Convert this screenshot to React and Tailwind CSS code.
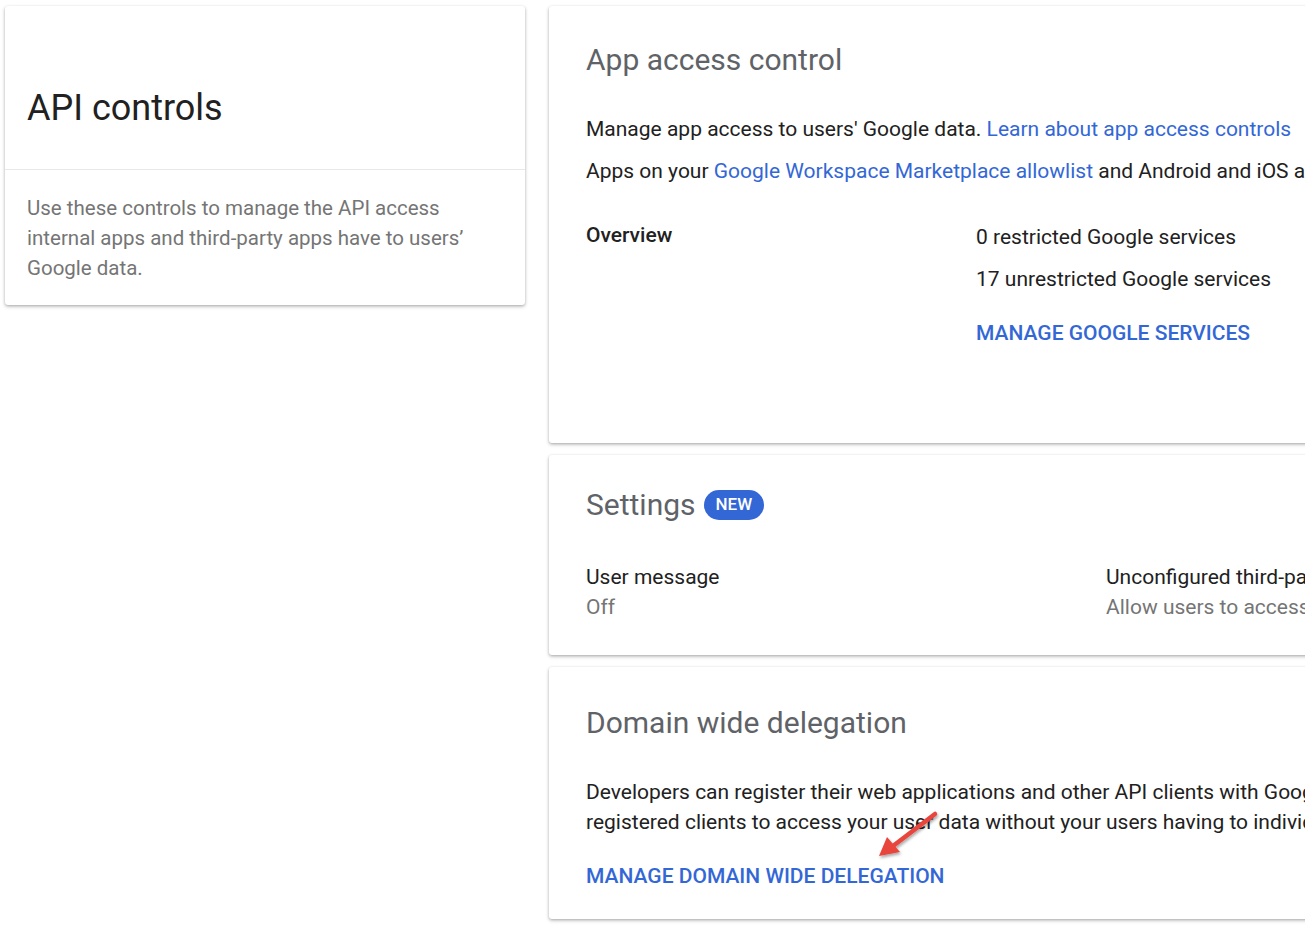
import React from "react";

const Card = ({ className = "", children }) => (
  <div className={`bg-white rounded-[3px] shadow-[0_1px_3px_rgba(0,0,0,0.25),0_2px_4px_rgba(0,0,0,0.12)] ${className}`}>
    {children}
  </div>
);

const App = () => {
  return (
    <div className="w-[1305px] h-[947px] overflow-hidden bg-white font-['Roboto',sans-serif] flex gap-[24px] pt-[6px] pl-[5px]">
      {/* Left card */}
      <div className="w-[520px] shrink-0">
        <Card>
          <div className="h-[164px] flex items-center px-[22px] pt-[41px] border-b border-[#e8e8e8]">
            <h1 className="text-[36px] text-[#212121] leading-none">API controls</h1>
          </div>
          <p className="px-[22px] pt-[23px] pb-[22px] text-[20.5px] leading-[30px] text-[#757575]">
            Use these controls to manage the API access internal apps and third-party apps have to users’ Google data.
          </p>
        </Card>
      </div>

      {/* Right column */}
      <div className="w-[900px] shrink-0 flex flex-col gap-[12px] text-[21px] text-[#212121]">
        <Card className="h-[437px] px-[37px] pt-[34px]">
          <h2 className="text-[30px] text-[#5f6368] leading-[40px]">App access control</h2>
          <p className="mt-[36px] leading-[26px] whitespace-nowrap">
            Manage app access to users' Google data.{" "}
            <span className="text-[#3367d6]">Learn about app access controls</span>
          </p>
          <p className="mt-[16px] leading-[26px] whitespace-nowrap">
            Apps on your <span className="text-[#3367d6]">Google Workspace Marketplace allowlist</span> and Android and iOS apps trusted by your organization are allowed.
          </p>
          <div className="mt-[36px] flex">
            <div className="w-[390px] shrink-0 font-medium leading-[26px] mt-[2px]">Overview</div>
            <div className="flex flex-col">
              <div className="leading-[26px] mt-[4px]">0 restricted Google services</div>
              <div className="leading-[26px] mt-[16px]">17 unrestricted Google services</div>
              <div className="leading-[26px] mt-[28px] text-[#3367d6] font-medium">MANAGE GOOGLE SERVICES</div>
            </div>
          </div>
        </Card>

        <Card className="h-[200px] px-[37px] pt-[30px]">
          <div className="flex items-center gap-[8px]">
            <h2 className="text-[30px] text-[#5f6368] leading-[40px]">Settings</h2>
            <span className="bg-[#3367d6] text-white rounded-full px-[12px] h-[30px] flex items-center text-[17px] font-medium">NEW</span>
          </div>
          <div className="mt-[37px] flex">
            <div className="w-[520px] shrink-0">
              <div className="leading-[30px]">User message</div>
              <div className="leading-[30px] text-[#757575]">Off</div>
            </div>
            <div className="whitespace-nowrap">
              <div className="leading-[30px]">Unconfigured third-party apps</div>
              <div className="leading-[30px] text-[#757575]">Allow users to access any third-party apps</div>
            </div>
          </div>
        </Card>

        <Card className="relative h-[252px] px-[37px] pt-[34px]">
          <h2 className="text-[30px] text-[#5f6368] leading-[40px] mt-[2px]">Domain wide delegation</h2>
          <p className="mt-[34px] leading-[30px] whitespace-nowrap">
            Developers can register their web applications and other API clients with Google to enable access to data in Google services like Gmail.
            <br />
            registered clients to access your user data without your users having to individually give consent or their passwords.
          </p>
          <div className="mt-[24px] text-[#3367d6] font-medium leading-[30px]">MANAGE DOMAIN WIDE DELEGATION</div>

          <svg className="absolute left-[326px] top-[143px]" width="66" height="52" viewBox="0 0 66 52">
            <defs>
              <filter id="sh" x="-30%" y="-30%" width="160%" height="160%">
                <feDropShadow dx="1" dy="2" stdDeviation="1.5" floodColor="#000" floodOpacity="0.35" />
              </filter>
            </defs>
            <g filter="url(#sh)">
              <line x1="60" y1="4" x2="18" y2="36" stroke="#e8453c" strokeWidth="4.5" strokeLinecap="round" />
              <polygon points="4,46 12,27 25,42" fill="#e8453c" />
            </g>
          </svg>
        </Card>
      </div>
    </div>
  );
};

export default App;
